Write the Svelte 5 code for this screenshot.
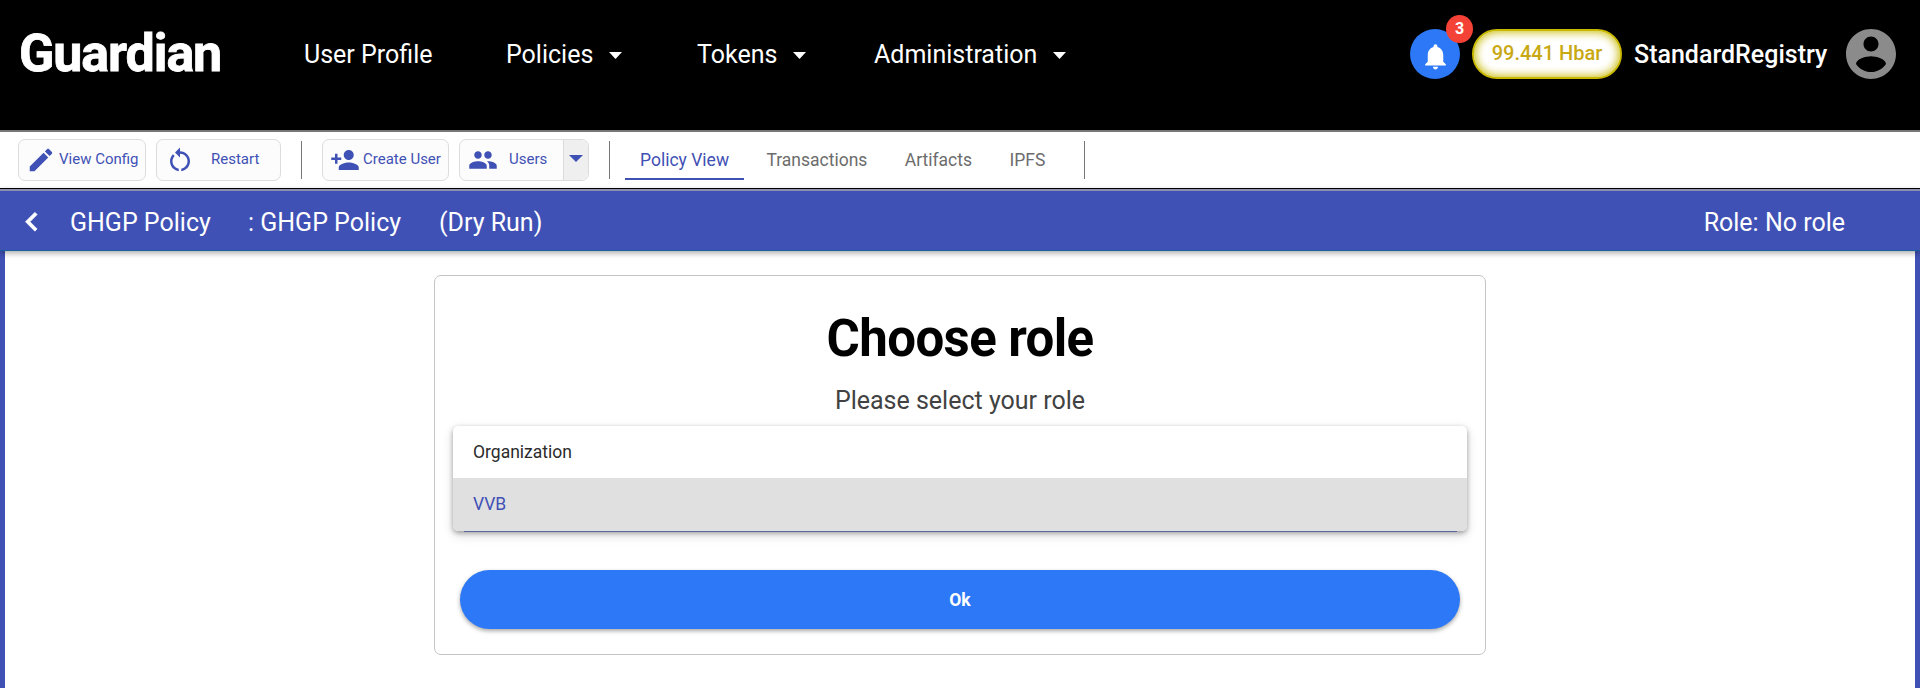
<script>
  const menu = [
    { label: 'User Profile', width: 202, caret: false },
    { label: 'Policies', width: 191, caret: true },
    { label: 'Tokens', width: 177, caret: true },
    { label: 'Administration', width: 220, caret: true }
  ];
  const tabs = ['Policy View', 'Transactions', 'Artifacts', 'IPFS'];
  const roles = ['Organization', 'VVB'];
  let activeTab = $state('Policy View');
  let role = $state('VVB');

  const icons = {
    edit: 'M3 17.25V21h3.75L17.81 9.94l-3.75-3.75L3 17.25zM20.71 7.04c.39-.39.39-1.02 0-1.41l-2.34-2.34c-.39-.39-1.02-.39-1.41 0l-1.83 1.83 3.75 3.75 1.83-1.83z',
    restart: 'M12 5V2L8 6l4 4V7c3.31 0 6 2.69 6 6 0 2.97-2.17 5.43-5 5.91v2.02c3.95-.49 7-3.85 7-7.93 0-4.42-3.58-8-8-8zm-6 8c0-1.65.67-3.15 1.76-4.24L6.34 7.34C4.9 8.79 4 10.79 4 13c0 4.08 3.05 7.44 7 7.93v-2.02c-2.83-.48-5-2.94-5-5.91z',
    personAdd: 'M15 12c2.21 0 4-1.79 4-4s-1.79-4-4-4-4 1.79-4 4 1.79 4 4 4zm-9-2V7H4v3H1v2h3v3h2v-3h3v-2H6zm9 4c-2.67 0-8 1.34-8 4v2h16v-2c0-2.66-5.33-4-8-4z',
    people: 'M16 11c1.66 0 2.99-1.34 2.99-3S17.66 5 16 5c-1.66 0-3 1.34-3 3s1.34 3 3 3zm-8 0c1.66 0 2.99-1.34 2.99-3S9.66 5 8 5C6.34 5 5 6.34 5 8s1.34 3 3 3zm0 2c-2.33 0-7 1.17-7 3.5V19h14v-2.5c0-2.33-4.67-3.5-7-3.5zm8 0c-.29 0-.62.02-.97.05 1.16.84 1.97 1.97 1.97 3.45V19h6v-2.5c0-2.33-4.67-3.5-7-3.5z',
    bell: 'M12 22c1.1 0 2-.9 2-2h-4c0 1.1.89 2 2 2zm6-6v-5c0-3.07-1.64-5.64-4.5-6.32V4c0-.83-.67-1.5-1.5-1.5s-1.5.67-1.5 1.5v.68C7.63 5.36 6 7.92 6 11v5l-2 2v1h16v-1l-2-2z',
    account: 'M12 2C6.48 2 2 6.48 2 12s4.48 10 10 10 10-4.48 10-10S17.52 2 12 2zm0 3c1.66 0 3 1.34 3 3s-1.34 3-3 3-3-1.34-3-3 1.34-3 3-3zm0 14.2c-2.5 0-4.71-1.28-6-3.22.03-1.99 4-3.08 6-3.08 1.99 0 5.97 1.09 6 3.08-1.29 1.94-3.5 3.22-6 3.22z',
    back: 'M15.41 7.41L14 6l-6 6 6 6 1.41-1.41L10.83 12z'
  };
</script>

{#snippet icon(name, size)}
  <svg class="icon" width={size} height={size} viewBox="0 0 24 24"><path d={icons[name]} /></svg>
{/snippet}

<div class="page">
  <header>
    <div class="brand">Guardian</div>
    <nav>
      {#each menu as item}
        <div class="menu-item" style="width: {item.width}px">
          <span>{item.label}</span>
          {#if item.caret}<svg class="caret" width="13" height="7" viewBox="0 0 13 7"><path d="M0 0h13L6.5 7z" /></svg>{/if}
        </div>
      {/each}
    </nav>
    <div class="account">
      <button class="bell" aria-label="Notifications">
        {@render icon('bell', 31)}
        <span class="badge">3</span>
      </button>
      <div class="balance">99.441 Hbar</div>
      <div class="user">StandardRegistry</div>
      <div class="avatar">{@render icon('account', 60)}</div>
    </div>
  </header>

  <div class="toolbar">
    <button class="tool view">{@render icon('edit', 30)}<span>View Config</span></button>
    <button class="tool restart">{@render icon('restart', 30)}<span>Restart</span></button>
    <i class="sep"></i>
    <button class="tool create">{@render icon('personAdd', 30)}<span>Create User</span></button>
    <div class="tool users">
      {@render icon('people', 30)}<span>Users</span>
      <button class="drop" aria-label="Choose user">
        <svg width="14" height="7" viewBox="0 0 14 7"><path d="M0 0h14L7 7z" /></svg>
      </button>
    </div>
    <i class="sep"></i>
    <div class="tabs">
      {#each tabs as tab}
        <button class="tab" class:active={tab === activeTab} onclick={() => (activeTab = tab)}>{tab}</button>
      {/each}
    </div>
    <i class="sep last"></i>
  </div>

  <div class="policy-bar">
    <div class="back">{@render icon('back', 37.5)}</div>
    <span class="name">GHGP Policy</span>
    <span class="topic">: GHGP Policy</span>
    <span class="status">(Dry Run)</span>
    <span class="role">Role: No role</span>
  </div>

  <main>
    <section class="card">
      <h1>Choose role</h1>
      <p>Please select your role</p>
      <div class="field">
        <div class="panel">
          {#each roles as name}
            <button class="option" class:selected={name === role} onclick={() => (role = name)}>{name}</button>
          {/each}
        </div>
        <div class="underline"></div>
      </div>
      <button class="ok">Ok</button>
    </section>
  </main>
</div>

<style>
  :global(body) { margin: 0; overflow: hidden; }
  .page, .page * { box-sizing: border-box; }
  .page {
    width: 1920px;
    height: 688px;
    display: flex;
    flex-direction: column;
    overflow: hidden;
    background: #fff;
    font-family: Roboto, "Liberation Sans", sans-serif;
  }
  button { font: inherit; border: 0; padding: 0; background: none; text-align: left; }
  svg { display: block; flex: none; fill: currentColor; }

  header {
    height: 130px;
    flex: none;
    display: flex;
    align-items: flex-start;
    padding-right: 24px;
    background: #000;
    color: #fff;
  }
  .brand {
    width: 304px;
    padding-left: 19px;
    margin-top: 24px;
    font-size: 52px;
    line-height: 60px;
    font-weight: 700;
    letter-spacing: -1.1px;
    -webkit-text-stroke: .8px #fff;
  }
  nav { display: flex; height: 108px; }
  .menu-item { display: flex; align-items: center; height: 108px; font-size: 25px; }
  .caret { margin: 3px 0 0 16px; }
  .account { display: flex; height: 108px; align-items: center; margin-left: auto; }
  .bell {
    position: relative;
    width: 50px;
    height: 50px;
    border-radius: 50%;
    display: flex;
    align-items: center;
    justify-content: center;
    padding-top: 4px;
    background: #2c78f6;
    color: #fff;
  }
  .badge {
    position: absolute;
    left: 36px;
    top: -14px;
    width: 27px;
    height: 28px;
    border-radius: 50%;
    background: #f44336;
    font-size: 16px;
    font-weight: 700;
    line-height: 27px;
    text-align: center;
  }
  .balance {
    width: 150px;
    height: 50px;
    margin-left: 12px;
    border: 2px solid #c8b900;
    border-radius: 25px;
    background: #fff;
    box-shadow: inset 0 0 10px 1px #c8b900;
    color: #c8a913;
    font-size: 20px;
    font-weight: 500;
    line-height: 45px;
    text-align: center;
  }
  .user { width: 211px; margin: 1px 0 0 12px; font-size: 25px; font-weight: 500; }
  .avatar { width: 51px; display: flex; justify-content: center; color: #8b8b8b; }

  .toolbar {
    height: 59px;
    flex: none;
    display: flex;
    align-items: flex-start;
    padding: 7px 0 0 18px;
    border-top: 2px solid #777;
    border-bottom: 1px solid #000;
    color: #3f51b5;
  }
  .tool {
    height: 42px;
    display: flex;
    align-items: center;
    border: 1px solid #dcdcdc;
    border-radius: 7px;
    background: #fcfcfc;
    color: #3f51b5;
    font-size: 15px;
    white-space: nowrap;
  }
  .tool span { margin-top: -2px; }
  .view { width: 128px; padding-left: 7px; }
  .view span { margin-left: 3px; }
  .restart { width: 125px; margin-left: 10px; padding-left: 8px; }
  .restart span { margin-left: 16px; }
  .create { width: 127px; padding-left: 7px; }
  .create span { margin-left: 3px; }
  .users { width: 130px; margin-left: 10px; padding-left: 8px; overflow: hidden; }
  .users span { margin-left: 11px; }
  .drop {
    width: 25px;
    height: 40px;
    margin-left: auto;
    display: flex;
    align-items: center;
    justify-content: center;
    padding-bottom: 3px;
    border-left: 1px solid #dcdcdc;
    background: #efefef;
    color: #3f51b5;
  }
  .sep { width: 1px; height: 38px; margin: 2px 20px 0; background: #777; }
  .sep.last { margin-left: 16px; }
  .tabs { display: flex; margin-left: -5px; }
  .tab {
    height: 41px;
    padding: 0 15px;
    border-bottom: 2px solid transparent;
    margin-right: 7.4px;
    color: #6c6c6c;
    font-size: 17.5px;
    line-height: 42px;
  }
  .tab.active { border-color: #3f51b5; color: #3f51b5; }

  .policy-bar {
    height: 62px;
    flex: none;
    position: relative;
    display: flex;
    align-items: center;
    padding: 4px 75px 0 0;
    border-top: 2px solid #8c8fae;
    border-bottom: 1px solid #17609c;
    background: #3f51b5;
    box-shadow: 0 2px 6px rgba(0, 0, 0, .35);
    color: #fff;
    font-size: 25px;
    white-space: nowrap;
  }
  .back { width: 70px; padding: 0 0 2px 13px; }
  .back :global(path) { stroke: #fff; stroke-width: .5px; }
  .name { width: 178px; }
  .topic { width: 191px; }
  .role { margin-left: auto; }

  main {
    flex: 1;
    border: solid #3f51b5;
    border-width: 0 5px;
    padding-top: 24px;
    display: flex;
    justify-content: center;
    align-items: flex-start;
  }
  .card {
    width: 1052px;
    height: 380px;
    display: flex;
    flex-direction: column;
    align-items: center;
    padding-top: 33px;
    border: 1px solid #c4c4c4;
    border-radius: 7px;
  }
  h1 {
    margin: 0;
    font-size: 51px;
    line-height: 60px;
    font-weight: 700;
    letter-spacing: -.6px;
    color: #000;
  }
  p { margin: 17px 0 0; font-size: 25px; line-height: 30px; color: #424242; }
  .field { width: 1014px; height: 106px; margin-top: 10px; display: flex; flex-direction: column; align-items: center; }
  .panel {
    width: 1014px;
    height: 105px;
    border-radius: 5px;
    box-shadow: 0 2px 5px rgba(0, 0, 0, .32), 0 4px 12px rgba(0, 0, 0, .14);
    display: flex;
    flex-direction: column;
    overflow: hidden;
    flex: none;
    background: #fff;
  }
  .option { height: 52px; padding-left: 20px; font-size: 17.5px; color: #2b2b2b; }
  .option.selected { height: 53px; padding-bottom: 2px; background: #e0e0e0; color: #3f51b5; }
  .underline { width: 993px; height: 1px; background: #5c659c; position: relative; }
  .ok {
    width: 1000px;
    height: 59px;
    margin-top: 38px;
    border-radius: 30px;
    background: #2c78f6;
    box-shadow: 0 2px 4px rgba(0, 0, 0, .35);
    color: #fff;
    font-size: 17.5px;
    font-weight: 700;
    text-align: center;
  }
</style>
